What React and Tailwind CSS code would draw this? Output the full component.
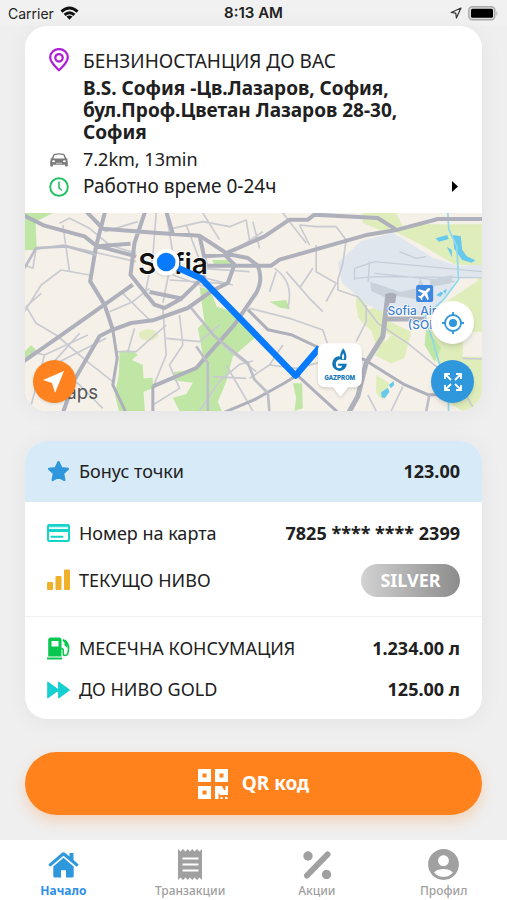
import React from "react";
import { MdAccountCircle } from "react-icons/md";

const StarIcon = () => (
  <svg viewBox="0 0 24 24" className="size-[23px]" fill="#2f97dc" stroke="#2f97dc" strokeWidth="2.400" strokeLinejoin="round">
    <path d="M12 2.200l2.900 6.200 6.900.9-5 4.700 1.300 6.800-6.100-3.300-6.100 3.300 1.300-6.800-5-4.700 6.900-.9z" />
  </svg>
);

const ReceiptIcon = () => (
  <svg viewBox="0 0 24 31" className="h-[31px] w-[24px]">
    <path fill="#a0a0a0" d="M0 0l2.500 2.500L5 0l2.500 2.500L9.800 0 12 2.500 14.200 0l2.300 2.500L19 0l2.500 2.500L24 0v31l-2.500-2.500L19 31l-2.500-2.500L14.200 31 12 28.500 9.800 31l-2.300-2.500L5 31l-2.500-2.500L0 31z" />
    <path d="M4.500 9.500h16M4.500 15.500h16M4.500 21.500h16" stroke="#fff" strokeWidth="2.200" />
  </svg>
);

const PinIcon = () => (
  <svg viewBox="0 0 20 24" className="h-[24px] w-[20px]" fill="none" stroke="#b01fd6" strokeWidth="2.300">
    <path d="M10 22.300C6.500 18.700 1.200 14 1.200 9.400a8.800 8.300 0 0 1 17.600 0c0 4.600-5.300 9.300-8.800 12.900z" strokeLinejoin="round" />
    <circle cx="10" cy="9.800" r="3.700" />
  </svg>
);

const CarIcon = () => (
  <svg viewBox="0 0 18 14" className="h-[14px] w-[18px]">
    <path fillRule="evenodd" fill="#7b7b7b" d="M4.500.8Q9-.3 13.500.8q.8.200 1.200 1l1.600 3.400 1.200.3v1l-.4.300q.7.900.7 2.200v3.700q0 .8-.8.800h-1.200q-.8 0-.8-.8v-.9H3v.9q0 .8-.8.800H1q-.8 0-.8-.8V9q0-1.300.7-2.200L.5 6.500v-1l1.200-.3 1.600-3.400q.4-.8 1.200-1zM4.700 2 3.300 5.600h11.400L13.300 2Q9 1.200 4.700 2z" />
    <ellipse cx="3.600" cy="8.300" rx="1.500" ry="1" fill="#fff" />
    <ellipse cx="14.400" cy="8.300" rx="1.500" ry="1" fill="#fff" />
    <path d="M6 10.300h6" stroke="#ddd" strokeWidth=".8" />
  </svg>
);

const ClockIcon = () => (
  <svg viewBox="0 0 20 20" className="size-[20px]" fill="none" stroke="#20c163" strokeWidth="1.900" strokeLinecap="round" strokeLinejoin="round">
    <circle cx="10" cy="10" r="8.800" />
    <path d="M10 5v6l2.500 2" strokeWidth="1.600" />
  </svg>
);

const CardIcon = () => (
  <svg viewBox="0 0 23 18" className="h-[18px] w-[23px]">
    <rect x="1" y="1" width="21" height="16" rx="1.500" fill="#fff" stroke="#16d3c9" strokeWidth="2" />
    <path d="M1 1.500h21M1 6.500h21" stroke="#16d3c9" strokeWidth="3" />
    <path d="M2 3.500h19" stroke="#c9f5f2" strokeWidth="1.500" />
    <path d="M4.500 12.800h3M9 12.800h6.500" stroke="#16d3c9" strokeWidth="2" strokeLinecap="round" />
  </svg>
);

const BarsIcon = () => (
  <svg viewBox="0 0 23 22" className="h-[22px] w-[23px]" fill="#f0b02a">
    <rect x="0" y="13" width="6" height="8" rx="1" />
    <rect x="8.500" y="7" width="6" height="14" rx="1" />
    <rect x="17" y="0.500" width="6" height="20.500" rx="1" />
  </svg>
);

const PumpIcon = () => (
  <svg viewBox="0 0 23 23" className="size-[23px]">
    <path fill="#08c74f" fillRule="evenodd" d="M4 .5h8q2.500 0 2.500 2.500v16.500H1.200V3Q1.200.5 4 .5zM4.500 4v5.500h7V4z" />
    <path d="M0 21.500h15" stroke="#08c74f" strokeWidth="1.800" />
    <path d="M14 11.500q2.300 0 2.300 2v3.300q0 1.700 1.800 1.700t2.600-1.700q.9-2.500.9-6.300 0-4-3.700-7.500" fill="none" stroke="#08c74f" strokeWidth="1.600" />
    <path d="M16.500 1.800 20.500 6v5l-3-2.500V5.700l-2-2z" fill="#08c74f" />
  </svg>
);

const ForwardIcon = () => (
  <svg viewBox="0 0 23 18" className="h-[18px] w-[23px]" fill="#16cfd0" stroke="#16cfd0" strokeWidth="1.200" strokeLinejoin="round">
    <path d="M.8 1.200v15.600L11.500 9zM11.700 1.200v15.600L22.300 9z" />
  </svg>
);

const QrIcon = () => (
  <svg viewBox="0 0 30 30" className="size-[30px]" fill="#fff">
    <path fillRule="evenodd" d="M0 0h13v13H0zM4.500 4.500v4h4v-4zM17 0h13v13H17zM21.500 4.500v4h4v-4zM0 17h13v13H0zM4.500 21.500v4h4v-4z" />
    <path d="M17 17h7l2 4h1.500v-4H30v9h-8l-1.500-2v6H17zM22.500 28h2v2h-2zM27 28h2.500v2H27z" />
  </svg>
);

const HomeIcon = () => (
  <svg viewBox="0 0 30 26" className="h-[26px] w-[31px]" fill="#2f97dc">
    <path d="M15 5.800 4.800 14.500V24q0 1.500 1.500 1.500h6.200v-7.200h5v7.200h6.200q1.500 0 1.500-1.500v-9.500z" />
    <path d="M13.500.8q1.500-1.200 3 0L21 4.600V1h4v7l4.600 4q.6.600.1 1.200l-.9 1q-.6.500-1.200 0L15 3.700 2.400 14.200q-.6.500-1.200 0l-.9-1q-.5-.6.1-1.200z" />
  </svg>
);

const PercentIcon = () => (
  <svg viewBox="0 0 28 28" className="size-[28px]" fill="#a0a0a0">
    <circle cx="5" cy="5" r="4.700" />
    <circle cx="23.500" cy="23.500" r="4.700" />
    <path d="M24.500 3.500 4 24.500" stroke="#a0a0a0" strokeWidth="6" strokeLinecap="round" />
  </svg>
);

const SofiaMap = () => (
  <svg viewBox="15 24 1374 594" preserveAspectRatio="xMidYMid slice" className="block h-full w-full" fill="none" strokeLinejoin="round">
    <rect x="-500" y="-200" width="2400" height="1000" fill="#f5f1e8" />
    {/* parks on the western half */}
    <g fill="#bfe6a5">
      <path d="M15 24h85l-52 26 4 84-37 2zM15 440l20-20 20 20-20 20-20 5z" />
      <path d="M300 440q35-12 55 10l-18 15 33 15 2 40 28-2v32l-28 10 4 58h-78l-12-50 12-60z" />
      <path d="M540 245l32 10 20 50 60 20 58 70-70 60-20 75-25 60 12 28H480l-20-40 40-10 20-35-65-8 10-25 65-5 20-45-15-80 20-20z" />
      <path d="M578 165h60l8 18-60-3z" />
    </g>
    <ellipse cx="387" cy="390" rx="29" ry="17" fill="#e1ebbd" />
    {/* meadows, water and the airfield */}
    <g transform="translate(690 0)">
      <path fill="#dfedba" d="M340 24h100l20 40-60 15-60-25zM440 82l60-24h197v560h-58l-40-25-10-95-40-40-15-95 60-75 90-60v-45l-70-5-110-65zM322 235l35 80 45-20 5 145-20 10-20-70-40-40-8-40z" />
      <path fill="#f5f1e8" d="M640 380h60v75h-60z" />
      <path fill="#dfedba" d="M410 345l75 35-20 80-40 15-50-25 50-60-30-10zM380 510l40 25-20 50-20-20z" />
      <path fill="#bfe6a5" d="M60 290l50-5 12 28-30-5zM130 535h28l2 75-25 8 5-40zM530 370l45 60-20 40-30-50zM-10 370l30 20-30 30z" />
      <path fill="#e0e6ee" d="M335 108l95-25 120 75 75 25 72-3v38l-75 5-40 65-50 45-140-15-40-20-75-65-12-60z" />
      <path stroke="#c5ced8" strokeWidth="4" d="M315 190l60-20 323 30M315 220l65-5 317 3M315 190v35M360 170l-4 60M375 205l240 25M450 140l50 20 30-5" />
      <path fill="#c9d2da" d="M362 230l90 30 50-10 10-30 18 35-10 30-80-12-20 10-55-25zM540 225l70-15-5 25-60 10z" />
      <path fill="#69c9ec" d="M610 90l24 4 4 40 14 20 26 12-12 7-28-8-24-34zM558 100l35-10 5 12-30 8zM592 125l15 10v22zM560 270l14-10 8 4-10 12zM580 258l12-6-4 14zM395 562l20-14 5 12-14 20-10-4zM418 540l14-12 2 12-10 10z" />
      <path stroke="#8fd9ec" strokeWidth="5" d="M595 24l3 50 24 50 5 100-45 60-55 50 25 80 20 70 25 60v74" />
    </g>
    {/* residential streets */}
    <g stroke="#c9cad2" strokeWidth="5">
      <path d="M40 135l90-15 220 50M50 130l-10 60-25-10M130 60l20 140M120 55l30-15 60 30 60 50 80 25M355 50l-100 30M410 24l-10 130-25 120M440 24l20 120-30 150" />
      <path d="M15 320l50-80 60-45 85 15M65 265l-45 40 30 50 60 35 100 85 70 55M35 440l40 10-40 150M75 450l130-60M120 470l140-70M110 480l70 60 70 70M180 385l-90 100" />
      <path d="M270 320l70-30 50-40M310 265l80 80M290 440h60l90-80M345 370l-20 70M430 310l10 140-40 98M480 330l10 90M440 400l100 10 60-50M490 420l-40 60 30 70-80 50" />
      <path d="M460 210l110 40 70 70M440 190l200 50M450 225l160 10M500 60l50 130 140 10M550 24l50 80M460 70l90-20 80 15 50-20 10 60M610 420l100 80M620 480l80 138M580 515l100 5M540 618l60-90 60-50 40-10" />
      <g transform="translate(690 0)">
        <path d="M-20 120l60-40M150 60l50 5h60l30 40-10 70-15 50v30l60 20 60 80 90 60 160 130 40 70M150 60l30 60M30 130l-20-80M200 120v80l60 35-30 55M100 24l70 90M80 200l-20 60M75 190q60 40 40 120M110 200l70 80 40 40M150 250l40-60M0 310l120 30 100 35 20 60M0 520l60-40 80 10 80-20M60 480l40-60M350 300v50l-30 60M460 545l-35 73M355 570l25 48M640 460l57 2" />
      </g>
    </g>
    {/* main roads */}
    <g transform="translate(15 24)" stroke="#aeb0bb" strokeWidth="12">
      <path d="M-20-2l80 40 120 32 35 28 120 32M185-5l50 52 165 13 125 8 80 52M242-5l-27 103-18 107 43 70 25 75M362-5l-32 95-12 95 72 90 30 10 50-28 72-70M425-5l20 67M375 237l100 20" />
      <path d="M-10 450l115-80 220-155M115 600l35-100 75-130 35-18 60-22 65-8 105-37 70-50 50-25 20-55-30-30M385 520l130-55 115-130 65-95q22-40 5-82M525 68l20 90" />
      <path d="M540 130l80-5 50 10 30 23h40l25-18 265-75 90-15 120-32h160M605 120l25-10 90-40 75-50h55l20-15 190 10 55 35M545 158h160M318 92l-100 8" />
      <path strokeWidth="9" d="M265 350l13 86-13 80 40 84M670 290l60 60 70 15 85 40 135 35 120 75 70 30h60M822 490l120 110M815 488l-35 22-90 50-95 40M385 520v80" />
      <path strokeWidth="8" stroke="#bcbec8" d="M500 285l70 85 100 80 20 50 40 40 5 60M515 400l35 50v150M0 165l35-60 90-5 90 25M1215 545l-12 60" />
      <path strokeWidth="15" d="M1090 245l-15 125-50 80-25 100-28 50M1080 318h120" />
    </g>
    <path d="M1097 268q18-10 34 0l-4 26h-24z" fill="#aaacb8" />
    <text x="356" y="207" fill="#111" stroke="#fff" strokeWidth="5" paintOrder="stroke" className="font-['Inter'] text-[84px] font-semibold">Sofia</text>
    <rect x="1190" y="240" width="51" height="51" rx="6" fill="#3e87e0" />
    <path d="M1231 250q-3-3-8 2l-6 6-18-5-4 4 15 8-7 8-5-1-3 3 7 4 4 7 3-3-1-5 8-7 8 15 4-4-5-18 6-6q5-5 2-8z" fill="#fff" />
    <g fill="#3e7fce" stroke="#fff" strokeWidth="5" paintOrder="stroke" className="font-['Inter'] text-[36px] font-medium">
      <text x="1104" y="329">Sofia Air</text>
      <text x="1165" y="372">(SOF)</text>
    </g>
    <text x="90" y="581" fill="#56565a" className="font-['Inter'] text-[56px]">Maps</text>
    {/* route */}
    <path d="M440 172l105 48 283 292 72-84" stroke="#087bfd" strokeWidth="19" />
    <path d="M812 498h34l-6 18h-20z" fill="#087bfd" />
    <circle cx="440" cy="171" r="40" fill="#fff" className="drop-shadow-md" />
    <circle cx="440" cy="171" r="28" fill="#087bfd" />
    {/* station pin */}
    <g className="drop-shadow-lg">
      <path d="M919 415h84q24 0 24 24v84q0 24-24 24h-17l-23 29-23-29h-21q-24 0-24-24v-84q0-24 24-24z" fill="#fff" />
    </g>
    <g>
      <path d="M957 454a22 22 0 1 0 25 22h-26v6h12q-2 8-9 8-10 0-10-13 0-12 14-14h13v-5z" fill="#1376b8" />
      <path d="M971 430q14 18 8 35h-15q-7-16 7-35z" fill="#1376b8" />
      <path d="M971 444q6 10 2 19h-5q-3-10 3-19z" fill="#fff" />
      <text x="961" y="526" textAnchor="middle" fill="#1376b8" className="font-['Roboto'] text-[19px] font-black">GAZPROM</text>
    </g>
  </svg>
);

const Row = ({ icon, label, children, className }) => (
  <div className={"flex items-center px-[22px] " + className}>
    <dt className="flex items-center gap-[9px]">
      <span className="flex w-[23px] justify-center">{icon}</span>
      {label}
    </dt>
    <dd className="ml-auto font-bold">{children}</dd>
  </div>
);

const Tab = ({ icon, label, active }) => (
  <a href="#" aria-current={active ? "page" : undefined}
    className={"flex flex-1 flex-col items-center pt-[8px] text-[12px] leading-[16px] " + (active ? "font-bold text-[#2f8fe8]" : "font-medium text-[#a0a0a0]")}>
    <span className="flex h-[33px] items-center">{icon}</span>
    <span className="mt-[2px]">{label}</span>
  </a>
);

export default function App() {
  return (
    <div className="flex min-h-screen flex-col bg-[#efefef] font-['Noto_Sans','Open_Sans',sans-serif] text-[#202020]">
      <header className="grid h-[26px] grid-cols-3 items-center bg-[#f1f1f1] px-[8px] font-['Inter',sans-serif] text-[14px] text-[#222]">
        <span className="flex items-center gap-[6px]">
          Carrier
          <svg viewBox="0 0 20 14" className="h-[14px] w-[19px]" fill="none" stroke="#111" strokeWidth="3">
            <path d="M1.500 5.500q8.500-7.500 17 0M4.800 9q5.200-4.500 10.400 0" />
            <path d="M10 14l-3.200-3.300q3.200-2.200 6.400 0z" fill="#111" stroke="none" />
          </svg>
        </span>
        <span className="text-center text-[15px] font-semibold">8:13 AM</span>
        <span className="flex items-center justify-end gap-[6px]">
          <svg viewBox="0 0 12 12" className="size-[12px]" fill="none" stroke="#333" strokeWidth="1.200" strokeLinejoin="round">
            <path d="M11 1 1.200 5.500l4.600.7.600 4.800z" />
          </svg>
          <svg viewBox="0 0 31 15" className="h-[15px] w-[31px]">
            <rect x=".8" y=".8" width="26" height="13" rx="3.500" fill="#ddd" stroke="#aaa" strokeWidth="1.400" />
            <rect x="3" y="2.800" width="22" height="9" rx="1.500" fill="#000" />
            <path d="M28.500 5q2 2.500 0 5z" fill="#aaa" />
          </svg>
        </span>
      </header>

      <main className="flex-1 px-[25px] pb-[25px]">
        <section className="overflow-hidden rounded-[22px] bg-white shadow-[0_2px_24px_rgba(0,0,0,0.05)]">
          <div className="grid grid-cols-[20px_1fr] gap-x-[14px] px-[24px] pt-[22px] pb-[13px] text-[19px]">
            <PinIcon />
            <h1 className="leading-[26px]">БЕНЗИНОСТАНЦИЯ ДО ВАС</h1>
            <p className="col-start-2 mt-[3px] mb-[3px] max-w-[340px] leading-[22px] font-bold">
              B.S. София -Цв.Лазаров, София, бул.Проф.Цветан Лазаров 28-30, София
            </p>
            <span className="flex items-center justify-center"><CarIcon /></span>
            <p className="text-[18px] leading-[27px]">7.2km, 13min</p>
            <span className="flex items-center"><ClockIcon /></span>
            <p className="flex items-center justify-between leading-[27px]">
              Работно време 0-24ч
              <svg viewBox="0 0 6 11" className="h-[11px] w-[6px]"><path d="M0 0v11l6-5.500z" fill="#000" /></svg>
            </p>
          </div>
          <div className="relative h-[198px]">
            <SofiaMap />
            <button aria-label="Навигация" className="absolute bottom-[8px] left-[8px] flex size-[43px] items-center justify-center rounded-full bg-[#ff8220] shadow">
              <svg viewBox="0 0 24 22" className="h-[22px] w-[24px]" fill="#fff"><path d="M21 0 0 9l9 3 3 10z" /></svg>
            </button>
            <button aria-label="Моето място" className="absolute right-[8px] bottom-[67px] flex size-[43px] items-center justify-center rounded-full bg-white shadow-md">
              <svg viewBox="0 0 22 22" className="size-[22px]" fill="none" stroke="#2f97dc" strokeWidth="1.800">
                <circle cx="11" cy="11" r="8" />
                <circle cx="11" cy="11" r="4" fill="#2f97dc" stroke="none" />
                <path d="M11 0v4M11 18v4M0 11h4M18 11h4" />
              </svg>
            </button>
            <button aria-label="Цял екран" className="absolute right-[8px] bottom-[8px] flex size-[43px] items-center justify-center rounded-full bg-[#2f97dc] shadow-md">
              <svg viewBox="0 0 18 18" className="size-[18px]" fill="none" stroke="#fff" strokeWidth="1.800">
                <path d="M1 6V1h5M1 1l6 6M12 1h5v5M17 1l-6 6M1 12v5h5M1 17l6-6M17 12v5h-5M17 17l-6-6" />
              </svg>
            </button>
          </div>
        </section>

        <dl className="mt-[30px] overflow-hidden rounded-[22px] bg-white text-[18px] shadow-[0_2px_24px_rgba(0,0,0,0.05)]">
          <Row className="h-[61px] bg-[#d7eaf8]" icon={<StarIcon />} label="Бонус точки">123.00</Row>
          <Row className="mt-[8px] h-[46px]" icon={<CardIcon />} label="Номер на карта">7825 **** **** 2399</Row>
          <Row className="mb-[12px] h-[48px]" icon={<BarsIcon />} label="ТЕКУЩО НИВО">
            <span className="flex h-[33px] w-[99px] items-center justify-center rounded-full bg-linear-to-r from-[#d2d2d2] to-[#8c8c8c] text-white">SILVER</span>
          </Row>
          <Row className="h-[53px] border-t border-[#f1f1f1] pt-[10px]" icon={<PumpIcon />} label="МЕСЕЧНА КОНСУМАЦИЯ">1.234.00 л</Row>
          <Row className="mb-[9px] h-[41px]" icon={<ForwardIcon />} label="ДО НИВО GOLD">125.00 л</Row>
        </dl>

        <button className="mt-[33px] flex h-[63px] w-full items-center justify-center gap-[14px] rounded-full bg-[#ff821d] text-[19px] font-bold text-white shadow-[0_6px_14px_rgba(255,130,29,0.25)]">
          <QrIcon />
          QR код
        </button>
      </main>

      <nav className="flex h-[60px] bg-white">
        <Tab active icon={<HomeIcon />} label="Начало" />
        <Tab icon={<ReceiptIcon />} label="Транзакции" />
        <Tab icon={<PercentIcon />} label="Акции" />
        <Tab icon={<MdAccountCircle className="size-[37px] text-[#a0a0a0]" />} label="Профил" />
      </nav>
    </div>
  );
}
